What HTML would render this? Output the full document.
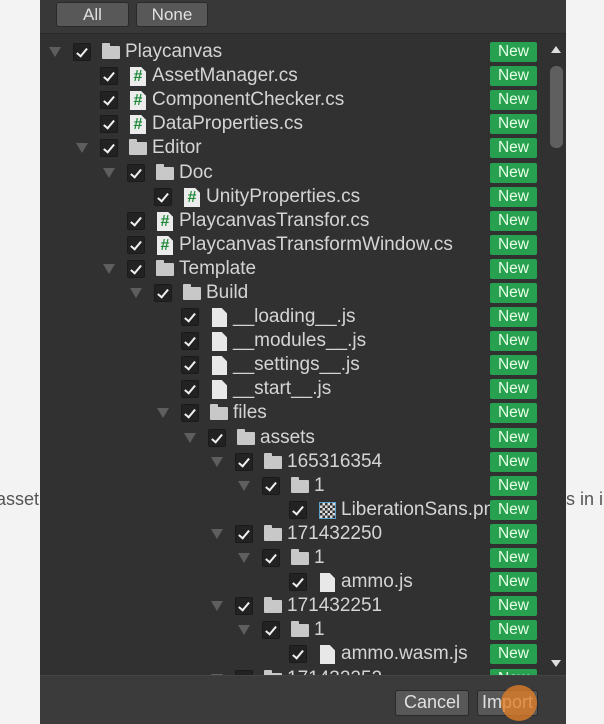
<!DOCTYPE html>
<html><head><meta charset="utf-8">
<style>
*{margin:0;padding:0;box-sizing:border-box}
body{width:604px;height:724px;overflow:hidden;background:#f3f3f3;font-family:"Liberation Sans",sans-serif;position:relative}
.bgtxt{position:absolute;top:489px;font-size:18px;color:#555}
.dlg{position:absolute;left:40px;top:0;width:526px;height:724px;background:#383838;overflow:hidden}
.btn{position:absolute;top:2px;height:25px;background:#585858;border:1px solid #2a2a2a;border-radius:3px;color:#e0e0e0;font-size:17px;text-align:center;line-height:23px}
.tree{position:absolute;left:0;top:33px;width:526px;height:642px;background:#313131;border-top:1px solid #2a2a2a;overflow:hidden}
.foot{position:absolute;left:0;top:675px;width:526px;height:49px;background:#3b3b3b;border-top:1px solid #444}
.r{position:absolute;left:0;width:526px;height:24px;margin-top:-1px}
.r .t{position:absolute;top:7px;width:0;height:0;border-left:6px solid transparent;border-right:6px solid transparent;border-top:10px solid #5e5e5e}
.r .c{position:absolute;top:3px;width:18px;height:18px;background:#222;border:1px solid #1a1a1a;border-radius:2px}
.r .c:after{content:"";position:absolute;left:5px;top:2px;width:4px;height:9px;border:solid #f0f0f0;border-width:0 2.5px 2.5px 0;transform:rotate(40deg)}
.r .f{position:absolute;top:6px;width:18px;height:13px;background:#c8c8c8;border-radius:1px}
.r .f:before{content:"";position:absolute;left:0;top:-3px;width:8px;height:4px;background:#c8c8c8;border-radius:1px 1px 0 0}
.r .p{position:absolute;top:3px;width:15px;height:19px;background:#e8e8e8;clip-path:polygon(0 0,65% 0,100% 28%,100% 100%,0 100%)}
.r .s{position:absolute;top:3px;width:16px;height:19px;background:#ececec;color:#1f8a3a;font-size:16px;font-weight:bold;line-height:19px;text-align:center;clip-path:polygon(0 0,70% 0,100% 25%,100% 100%,0 100%)}
.r .i{position:absolute;top:4px;width:17px;height:17px;border:1.5px solid #5aa0c8;background:repeating-conic-gradient(#ddd 0 25%,#333 0 50%) 0 0/5px 5px}
.r .x{position:absolute;top:0;font-size:19px;color:#d4d4d4;line-height:23px;white-space:nowrap}
.r .n{position:absolute;left:450px;top:2px;width:47px;height:20px;background:#27a14f;border-radius:2px;color:#e8ffe8;font-size:15.5px;line-height:20px;text-align:center}
</style></head><body>
<div class="bgtxt" style="left:-4px">asset</div>
<div class="bgtxt" style="left:566px">s in i</div>
<div class="dlg">
<div class="btn" style="left:16px;width:73px">All</div>
<div class="btn" style="left:96px;width:72px">None</div>
<div class="tree">
<div class="r" style="top:7px"><div class="t" style="left:9px"></div><div class="c" style="left:33px"></div><div class="f" style="left:62px"></div><div class="x" style="left:85px">Playcanvas</div><div class="n">New</div></div>
<div class="r" style="top:31px"><div class="c" style="left:60px"></div><div class="s" style="left:90px">#</div><div class="x" style="left:112px">AssetManager.cs</div><div class="n">New</div></div>
<div class="r" style="top:55px"><div class="c" style="left:60px"></div><div class="s" style="left:90px">#</div><div class="x" style="left:112px">ComponentChecker.cs</div><div class="n">New</div></div>
<div class="r" style="top:79px"><div class="c" style="left:60px"></div><div class="s" style="left:90px">#</div><div class="x" style="left:112px">DataProperties.cs</div><div class="n">New</div></div>
<div class="r" style="top:103px"><div class="t" style="left:36px"></div><div class="c" style="left:60px"></div><div class="f" style="left:89px"></div><div class="x" style="left:112px">Editor</div><div class="n">New</div></div>
<div class="r" style="top:128px"><div class="t" style="left:63px"></div><div class="c" style="left:87px"></div><div class="f" style="left:116px"></div><div class="x" style="left:139px">Doc</div><div class="n">New</div></div>
<div class="r" style="top:152px"><div class="c" style="left:114px"></div><div class="s" style="left:144px">#</div><div class="x" style="left:166px">UnityProperties.cs</div><div class="n">New</div></div>
<div class="r" style="top:176px"><div class="c" style="left:87px"></div><div class="s" style="left:117px">#</div><div class="x" style="left:139px">PlaycanvasTransfor.cs</div><div class="n">New</div></div>
<div class="r" style="top:200px"><div class="c" style="left:87px"></div><div class="s" style="left:117px">#</div><div class="x" style="left:139px">PlaycanvasTransformWindow.cs</div><div class="n">New</div></div>
<div class="r" style="top:224px"><div class="t" style="left:63px"></div><div class="c" style="left:87px"></div><div class="f" style="left:116px"></div><div class="x" style="left:139px">Template</div><div class="n">New</div></div>
<div class="r" style="top:248px"><div class="t" style="left:90px"></div><div class="c" style="left:114px"></div><div class="f" style="left:143px"></div><div class="x" style="left:166px">Build</div><div class="n">New</div></div>
<div class="r" style="top:272px"><div class="c" style="left:141px"></div><div class="p" style="left:172px"></div><div class="x" style="left:193px">__loading__.js</div><div class="n">New</div></div>
<div class="r" style="top:296px"><div class="c" style="left:141px"></div><div class="p" style="left:172px"></div><div class="x" style="left:193px">__modules__.js</div><div class="n">New</div></div>
<div class="r" style="top:320px"><div class="c" style="left:141px"></div><div class="p" style="left:172px"></div><div class="x" style="left:193px">__settings__.js</div><div class="n">New</div></div>
<div class="r" style="top:344px"><div class="c" style="left:141px"></div><div class="p" style="left:172px"></div><div class="x" style="left:193px">__start__.js</div><div class="n">New</div></div>
<div class="r" style="top:368px"><div class="t" style="left:117px"></div><div class="c" style="left:141px"></div><div class="f" style="left:170px"></div><div class="x" style="left:193px">files</div><div class="n">New</div></div>
<div class="r" style="top:393px"><div class="t" style="left:144px"></div><div class="c" style="left:168px"></div><div class="f" style="left:197px"></div><div class="x" style="left:220px">assets</div><div class="n">New</div></div>
<div class="r" style="top:417px"><div class="t" style="left:171px"></div><div class="c" style="left:195px"></div><div class="f" style="left:224px"></div><div class="x" style="left:247px">165316354</div><div class="n">New</div></div>
<div class="r" style="top:441px"><div class="t" style="left:198px"></div><div class="c" style="left:222px"></div><div class="f" style="left:251px"></div><div class="x" style="left:274px">1</div><div class="n">New</div></div>
<div class="r" style="top:465px"><div class="c" style="left:249px"></div><div class="i" style="left:279px"></div><div class="x" style="left:301px">LiberationSans.png</div><div class="n">New</div></div>
<div class="r" style="top:489px"><div class="t" style="left:171px"></div><div class="c" style="left:195px"></div><div class="f" style="left:224px"></div><div class="x" style="left:247px">171432250</div><div class="n">New</div></div>
<div class="r" style="top:513px"><div class="t" style="left:198px"></div><div class="c" style="left:222px"></div><div class="f" style="left:251px"></div><div class="x" style="left:274px">1</div><div class="n">New</div></div>
<div class="r" style="top:537px"><div class="c" style="left:249px"></div><div class="p" style="left:280px"></div><div class="x" style="left:301px">ammo.js</div><div class="n">New</div></div>
<div class="r" style="top:561px"><div class="t" style="left:171px"></div><div class="c" style="left:195px"></div><div class="f" style="left:224px"></div><div class="x" style="left:247px">171432251</div><div class="n">New</div></div>
<div class="r" style="top:585px"><div class="t" style="left:198px"></div><div class="c" style="left:222px"></div><div class="f" style="left:251px"></div><div class="x" style="left:274px">1</div><div class="n">New</div></div>
<div class="r" style="top:609px"><div class="c" style="left:249px"></div><div class="p" style="left:280px"></div><div class="x" style="left:301px">ammo.wasm.js</div><div class="n">New</div></div>
<div class="r" style="top:634px"><div class="t" style="left:171px"></div><div class="c" style="left:195px"></div><div class="f" style="left:224px"></div><div class="x" style="left:247px">171432252</div><div class="n">New</div></div>
<div style="position:absolute;left:511px;top:12px;width:0;height:0;border-left:5px solid transparent;border-right:5px solid transparent;border-bottom:7px solid #ddd"></div>
<div style="position:absolute;left:510px;top:32px;width:13px;height:82px;background:#5f5f5f;border-radius:6px"></div>
<div style="position:absolute;left:511px;top:626px;width:0;height:0;border-left:5px solid transparent;border-right:5px solid transparent;border-top:7px solid #ddd"></div>
</div>
<div class="foot">
<div class="btn" style="left:355px;top:14px;width:74px;height:26px;font-size:18px">Cancel</div>
<div class="btn" style="left:437px;top:14px;width:61px;height:26px;font-size:18px">Import</div>
<div style="position:absolute;left:461px;top:9px;width:36px;height:36px;border-radius:50%;background:rgba(225,125,40,0.78)"></div>
</div>
</div>
</body></html>
